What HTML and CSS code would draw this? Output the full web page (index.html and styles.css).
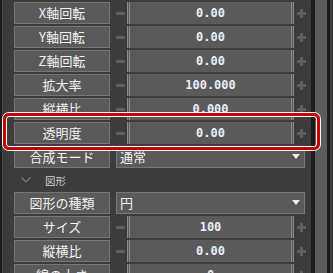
FILE: index.html
```html
<!DOCTYPE html>
<html lang="ja">
<head>
    <meta charset="UTF-8">
    <title>図形 プロパティ</title>
    <link rel="stylesheet" href="styles.css">
</head>
<body>
    <div class="window">
        <div class="edge"></div>
        <div class="props">
            <div class="row">
                <div class="label">X軸回転</div>
                <div class="step minus"><span class="bar"></span></div>
                <div class="field">0.00</div>
                <div class="step plus"><svg width="9" height="9"><rect x="3" y="0" width="3" height="9"/><rect x="0" y="3" width="9" height="3"/></svg></div>
            </div>
            <div class="row">
                <div class="label">Y軸回転</div>
                <div class="step minus"><span class="bar"></span></div>
                <div class="field">0.00</div>
                <div class="step plus"><svg width="9" height="9"><rect x="3" y="0" width="3" height="9"/><rect x="0" y="3" width="9" height="3"/></svg></div>
            </div>
            <div class="row">
                <div class="label">Z軸回転</div>
                <div class="step minus"><span class="bar"></span></div>
                <div class="field">0.00</div>
                <div class="step plus"><svg width="9" height="9"><rect x="3" y="0" width="3" height="9"/><rect x="0" y="3" width="9" height="3"/></svg></div>
            </div>
            <div class="row">
                <div class="label">拡大率</div>
                <div class="step minus"><span class="bar"></span></div>
                <div class="field">100.000</div>
                <div class="step plus"><svg width="9" height="9"><rect x="3" y="0" width="3" height="9"/><rect x="0" y="3" width="9" height="3"/></svg></div>
            </div>
            <div class="row">
                <div class="label">縦横比</div>
                <div class="step minus"><span class="bar"></span></div>
                <div class="field">0.000</div>
                <div class="step plus"><svg width="9" height="9"><rect x="3" y="0" width="3" height="9"/><rect x="0" y="3" width="9" height="3"/></svg></div>
            </div>
            <div class="row">
                <div class="label">透明度</div>
                <div class="step minus"><span class="bar"></span></div>
                <div class="field">0.00</div>
                <div class="step plus"><svg width="9" height="9"><rect x="3" y="0" width="3" height="9"/><rect x="0" y="3" width="9" height="3"/></svg></div>
            </div>
            <div class="row">
                <div class="label">合成モード</div>
                <div class="select">通常<span class="arrow"></span></div>
            </div>

            <div class="section">
                <svg class="chevron" width="10" height="6"><polyline points="0.5,0.5 5,5 9.5,0.5"/></svg>
                <span>図形</span>
            </div>

            <div class="row">
                <div class="label">図形の種類</div>
                <div class="select">円<span class="arrow"></span></div>
            </div>
            <div class="row">
                <div class="label">サイズ</div>
                <div class="step minus"><span class="bar"></span></div>
                <div class="field">100</div>
                <div class="step plus"><svg width="9" height="9"><rect x="3" y="0" width="3" height="9"/><rect x="0" y="3" width="9" height="3"/></svg></div>
            </div>
            <div class="row">
                <div class="label">縦横比</div>
                <div class="step minus"><span class="bar"></span></div>
                <div class="field">0.00</div>
                <div class="step plus"><svg width="9" height="9"><rect x="3" y="0" width="3" height="9"/><rect x="0" y="3" width="9" height="3"/></svg></div>
            </div>
            <div class="row">
                <div class="label">線の太さ</div>
                <div class="step minus"><span class="bar"></span></div>
                <div class="field">0</div>
                <div class="step plus"><svg width="9" height="9"><rect x="3" y="0" width="3" height="9"/><rect x="0" y="3" width="9" height="3"/></svg></div>
            </div>
        </div>
        <div class="scroll">
            <div class="thumb"></div>
        </div>

        <!-- 透明度の強調枠 -->
        <div class="highlight"></div>
    </div>
</body>
</html>
```

FILE: styles.css
```css
body {
    margin: 0;
    background: #3c3c3c;
    font-family: "Noto Sans CJK JP", "Noto Sans", sans-serif;
}

.window {
    position: relative;
    display: flex;
    width: 333px;
    height: 273px;
    overflow: hidden;
    background: #3c3c3c;
}

.edge {
    width: 2px;
    background: #1c1c1c;
    border-right: 1px solid #4a4a4a;
}

.props {
    flex: 1;
    padding: 2px 0 0 11px;
}

.row {
    display: flex;
    height: 22px;
    margin-bottom: 2px;
}

.label {
    box-sizing: border-box;
    width: 96px;
    height: 22px;
    border: 1px solid #777777;
    background: #5a5a5a;
    color: #f2f2f2;
    font-size: 13px;
    line-height: 19px;
    text-align: center;
    white-space: nowrap;
}

.step {
    display: flex;
    align-items: center;
    width: 17px;
}

.step.minus {
    justify-content: flex-end;
    box-sizing: border-box;
    padding-right: 2px;
}

.step.plus {
    box-sizing: border-box;
    padding-left: 3px;
}

.bar {
    width: 9px;
    height: 3px;
    border-radius: 1px;
    background: #5f5f5f;
}

.plus svg {
    fill: #5f5f5f;
}

.field {
    box-sizing: border-box;
    width: 167px;
    border-left: 3px double #8a8a8a;
    border-right: 3px double #8a8a8a;
    background: #5a5a5a;
    color: #e6eefa;
    font-family: "DejaVu Sans Mono", monospace;
    font-weight: bold;
    font-size: 12px;
    line-height: 22px;
    text-align: center;
}

.select {
    position: relative;
    box-sizing: border-box;
    width: 189px;
    margin-left: 6px;
    padding-left: 3px;
    border: 1px solid #777777;
    background: #5a5a5a;
    color: #f2f2f2;
    font-size: 13px;
    line-height: 19px;
}

.arrow {
    position: absolute;
    right: 4px;
    top: 7px;
    border-left: 4px solid transparent;
    border-right: 4px solid transparent;
    border-top: 5px solid #eeeeee;
}

.section {
    display: flex;
    align-items: center;
    height: 24px;
    margin-top: -2px;
    padding-left: 7px;
    color: #cfcfcf;
    font-size: 10.5px;
}

.chevron {
    margin-right: 14px;
    fill: none;
    stroke: #7a7a7a;
    stroke-width: 1.2;
}

.scroll {
    display: flex;
    width: 22px;
    background: #1c1c1c;
    padding-left: 4px;
    box-sizing: border-box;
    border-right: 3px solid #3c3c3c;
}

.thumb {
    width: 12px;
    background: #5c5c5c;
}

.highlight {
    position: absolute;
    left: 3px;
    top: 113px;
    width: 317px;
    height: 37px;
    box-sizing: border-box;
    border: 3px solid #c80000;
    border-radius: 6px;
    box-shadow: 0 0 0 1px #ffffff, inset 0 0 0 1px #ffffff;
}
```
